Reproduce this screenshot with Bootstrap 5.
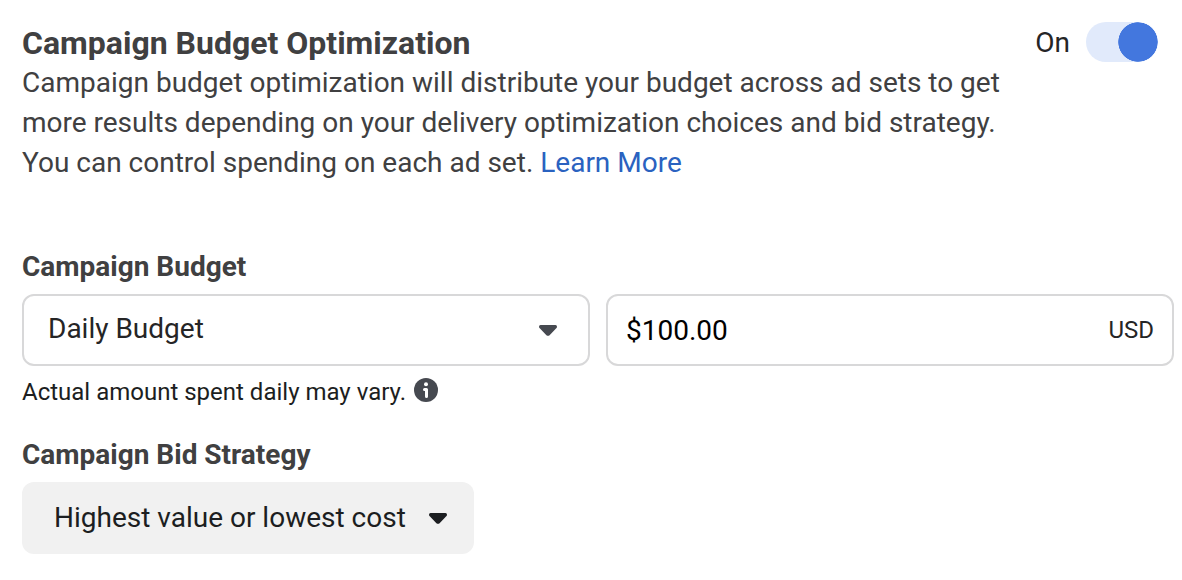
<!DOCTYPE html>
<html lang="en">
<head>
<meta charset="utf-8">
<meta name="viewport" content="width=device-width, initial-scale=1">
<title>Campaign Budget Optimization</title>
<link href="https://cdn.jsdelivr.net/npm/bootstrap@5.3.0/dist/css/bootstrap.min.css" rel="stylesheet">
<style>
body{font-family:Roboto,"Liberation Sans",sans-serif;font-size:28px;line-height:40px;color:#404041;background:#fff}
.page{padding:22px 8px 26px 22px}
.title{font-size:32px;line-height:40px;font-weight:700;color:#404041}
.intro{max-width:1000px;padding-top:1px}
.intro a{color:#2a62c0;text-decoration:none}
.toggle-row{gap:16px;margin-right:16px;color:#252526}
.toggle-row label{line-height:42px}
.toggle-row .form-check-input{width:72px;height:40px;border:0;background-color:#e1eafb;background-size:40px;background-image:radial-gradient(circle closest-side,#4377de 97%,transparent);background-repeat:no-repeat;background-position:left center}
.toggle-row .form-check-input:checked{background-color:#e1eafb;background-position:right center;background-image:radial-gradient(circle closest-side,#4377de 97%,transparent)}
.budget{margin-top:64px}
.field-label{font-weight:700;color:#404041;line-height:40px}
.fields{gap:16px;margin-top:7px}
.field{height:72px;border:2px solid #d8d8d9;border-radius:12px;color:#252526;flex:1 1 0;min-width:0;position:relative;background:#fff}
.field select,.strategy select{font-size:28px;line-height:40px;color:inherit;border:0;background:none;appearance:none;width:100%;height:100%}
.field select{padding:0 60px 2px 24px}
.field input{border:0;font-size:28px;color:#000;padding:0 18px;background:none;min-width:0;height:100%}
.unit{font-size:24px;padding-right:18px}
.caret{position:absolute;pointer-events:none;right:31px;top:29px}
.hint{font-size:24px;line-height:32px;margin-top:10px;gap:8px;color:#1c1e21}
.hint svg{margin-top:2px}
.strategy-label{margin-top:27px}
.strategy{width:452px;max-width:100%;height:72px;border-radius:12px;background:#f1f1f1;margin-top:7px;position:relative;color:#1c1e21}
.strategy select{padding:0 60px 0 32px}
.strategy .caret{right:27px;top:31px}
</style>
</head>
<body>
<main class="page">
<header class="d-flex justify-content-between align-items-start">
<div class="intro"><h1 class="title mb-0">Campaign Budget Optimization</h1>
<p class="mb-0">Campaign budget optimization will distribute your budget across ad sets to get more results depending on your delivery optimization choices and bid strategy. You can control spending on each ad set. <a href="#">Learn More</a></p></div>
<div class="toggle-row form-switch d-flex align-items-start p-0"><label for="cbo">On</label><input class="form-check-input m-0" type="checkbox" role="switch" id="cbo" checked></div>
</header>
<section class="budget">
<label class="field-label d-block" for="type">Campaign Budget</label>
<div class="fields d-flex">
<div class="field"><select id="type"><option>Daily Budget</option><option>Lifetime Budget</option></select>
<svg class="caret" width="18" height="11" viewBox="0 0 18 11" aria-hidden="true"><path d="M1.500 0H16.500Q18 .2 18 1.700Q18 2.600 17 3.600L10.600 10.200Q9 11.500 7.400 10.200L1 3.600Q0 2.600 0 1.700Q0 .2 1.500 0Z" fill="#464950"/></svg></div>
<div class="field d-flex align-items-center"><input class="flex-grow-1" type="text" value="$100.00" aria-label="Budget amount"><span class="unit">USD</span></div>
</div>
<div class="hint d-flex align-items-start"><span>Actual amount spent daily may vary.</span>
<svg width="24" height="24" viewBox="0 0 24 24" aria-hidden="true"><circle cx="12" cy="12" r="12" fill="#464950"/><circle cx="12" cy="6.200" r="2" fill="#fff"/><path d="M10.500 11.500H12.500V18.500" fill="none" stroke="#fff" stroke-width="3" stroke-linecap="round" stroke-linejoin="round"/></svg></div>
<label class="field-label strategy-label d-block" for="bid">Campaign Bid Strategy</label>
<div class="strategy"><select id="bid"><option>Highest value or lowest cost</option><option>Cost cap</option></select>
<svg class="caret" width="18" height="11" viewBox="0 0 18 11" aria-hidden="true"><path d="M1.500 0H16.500Q18 .2 18 1.700Q18 2.600 17 3.600L10.600 10.200Q9 11.500 7.400 10.200L1 3.600Q0 2.600 0 1.700Q0 .2 1.500 0Z" fill="#1c1e21"/></svg></div>
</section>
</main>
<script src="https://cdn.jsdelivr.net/npm/bootstrap@5.3.0/dist/js/bootstrap.bundle.min.js"></script>
</body>
</html>
